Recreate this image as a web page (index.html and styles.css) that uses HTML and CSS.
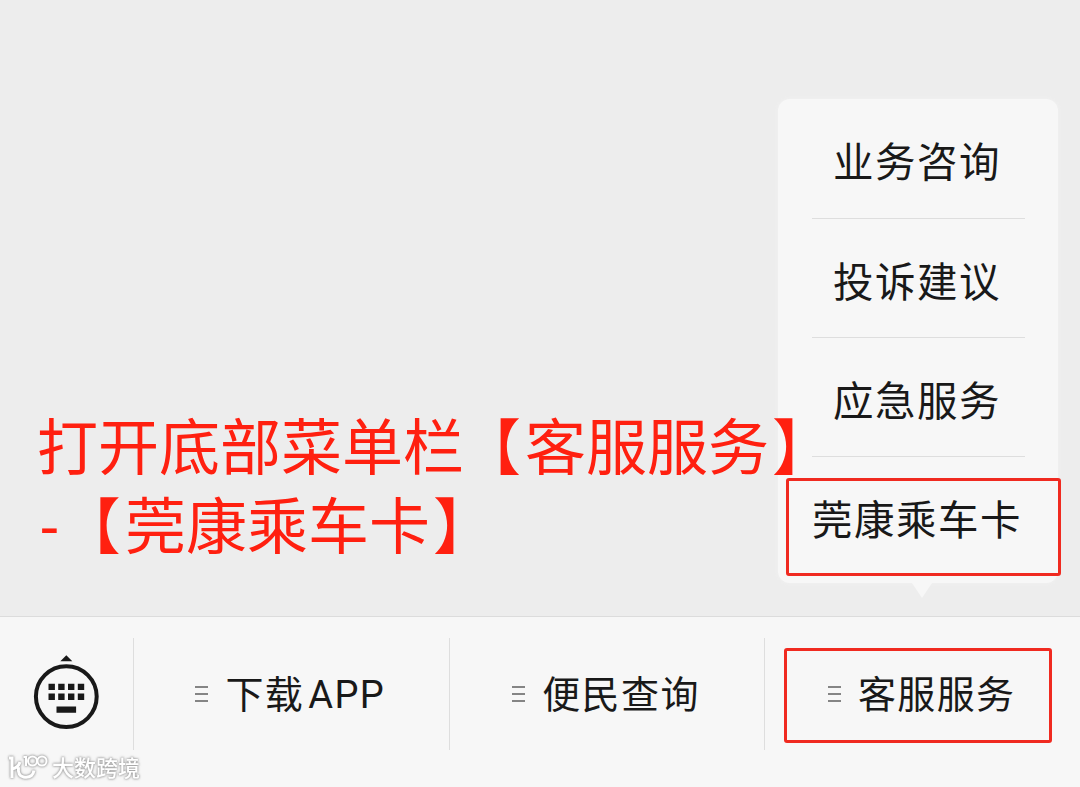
FILE: index.html
```html
<!DOCTYPE html>
<html lang="zh-CN">
<head>
  <meta charset="UTF-8">
  <meta name="viewport" content="width=device-width, initial-scale=1.0">
  <title>客服服务</title>
  <link rel="stylesheet" href="styles.css">
</head>
<body>
  <main class="chat">
    <div class="popup">
      <a class="popup-item">业务咨询</a>
      <a class="popup-item">投诉建议</a>
      <a class="popup-item">应急服务</a>
      <a class="popup-item">莞康乘车卡</a>
    </div>
    <p class="note">打开底部菜单栏<span class="open">【</span>客服服务<span class="close">】</span><br><span class="dash">-</span><span class="open">【</span>莞康乘车卡<span class="close">】</span></p>
    <div class="mark mark-card"></div>
  </main>

  <nav class="bar">
    <div class="keyboard">
      <svg width="67" height="76" viewBox="0 0 67 76">
        <path d="M27.3 7.300l6-6 6 6z" fill="#191919"/>
        <circle cx="33.300" cy="42.600" r="30.400" fill="none" stroke="#191919" stroke-width="4"/>
        <path d="M15.500 29.700h6.400v6.400h-6.400zM25.200 29.700h6.400v6.400h-6.400zM35 29.700h6.400v6.400H35zM44.800 29.700h6.400v6.400h-6.400zM15.500 39.500h6.400v6.400h-6.400zM25.200 39.500h6.400v6.400h-6.400zM35 39.500h6.400v6.400H35zM44.800 39.500h6.400v6.400h-6.400zM23.500 52.400h19.600v6.300H23.500z" fill="#191919"/>
      </svg>
    </div>
    <a class="tab"><span class="lines"></span><span class="label">下载<span class="latin">APP</span></span></a>
    <a class="tab"><span class="lines"></span><span class="label">便民查询</span></a>
    <a class="tab"><span class="lines"></span><span class="label">客服服务</span></a>
    <div class="mark mark-tab"></div>
    <div class="watermark">
      <svg width="40" height="30" viewBox="0 0 40 30" fill="none" stroke="#fff" stroke-width="3">
        <path d="M0 4h3v20M3 15q6-1 8-7M9.500 13q-1 9 5 10 5 1 8-1.500 2-2 2.500-5"/>
        <path d="M14.500 3H17v9" stroke-width="2"/>
        <circle cx="23.500" cy="7" r="4.500" stroke-width="2"/>
        <circle cx="33" cy="7" r="4.500" stroke-width="2"/>
      </svg>
      <span>大数跨境</span>
    </div>
  </nav>
</body>
</html>
```
FILE: styles.css
```css
* {
  box-sizing: border-box;
}
body {
  margin: 0;
  height: 787px;
  display: flex;
  flex-direction: column;
  overflow: hidden;
  background-color: #ededed;
  color: #191919;
  font-family: Roboto, "Noto Sans CJK SC", sans-serif;
}
.chat {
  position: relative;
  flex: 1;
}
.popup {
  position: absolute;
  top: 99px;
  right: 22px;
  width: 280px;
  height: 484px;
  padding: 0 33px 0 34px;
  border-radius: 12px;
  background-color: #f7f7f7;
  box-shadow: 0 0 4px #f2f2f2;
}
.popup::after {
  content: "";
  position: absolute;
  top: 100%;
  left: 134px;
  border: 10px solid transparent;
  border-top: 15px solid #f7f7f7;
  border-bottom: 0;
}
.popup-item {
  display: flex;
  align-items: center;
  justify-content: center;
  height: 119px;
  padding: 2px 3px 0 0;
  border-bottom: 1px solid #dedede;
  font-size: 40.5px;
  letter-spacing: 1.5px;
  white-space: nowrap;
}
.popup-item:first-child {
  height: 120px;
}
.popup-item:last-child {
  border-bottom: 0;
}
.note {
  position: absolute;
  top: 410px;
  left: 37px;
  margin: 0;
  color: #ff2010;
  font-size: 61px;
  line-height: 79px;
  white-space: nowrap;
}
.open {
  margin: 0 4px 0 -4px;
}
.close {
  margin-left: 3px;
}
.dash {
  margin: 0 6px 0 4px;
}
.mark {
  position: absolute;
  border: 3px solid #f02a20;
  border-radius: 3px;
}
.mark-card {
  top: 478px;
  left: 786px;
  width: 275px;
  height: 98px;
}
.bar {
  position: relative;
  display: flex;
  height: 171px;
  padding: 21px 0 37px;
  border-top: 1px solid #dcdcdc;
  background-color: #f7f7f7;
}
.keyboard {
  width: 133px;
  padding: 16px 0 0 33px;
}
.tab {
  flex: 1;
  display: flex;
  align-items: center;
  justify-content: center;
  gap: 17px;
  padding-right: 2px;
  border-left: 1px solid #dedede;
}
.lines {
  width: 13px;
  height: 16px;
  border-top: 2px solid #858585;
  border-bottom: 2px solid #858585;
  background: linear-gradient(#858585, #858585) center / 100% 2px no-repeat;
}
.label {
  padding-bottom: 6px;
  font-size: 38px;
  letter-spacing: 1.4px;
  white-space: nowrap;
}
.latin {
  margin-left: 4px;
}
.mark-tab {
  top: 31px;
  left: 784px;
  width: 268px;
  height: 95px;
}
.watermark {
  position: absolute;
  left: 9px;
  bottom: 3px;
  display: flex;
  align-items: center;
  gap: 3px;
  color: #fff;
  font-size: 22px;
  font-weight: 500;
  line-height: 30px;
  filter: drop-shadow(0 0 1px #999) drop-shadow(0 0 1px #bbb);
}
```
